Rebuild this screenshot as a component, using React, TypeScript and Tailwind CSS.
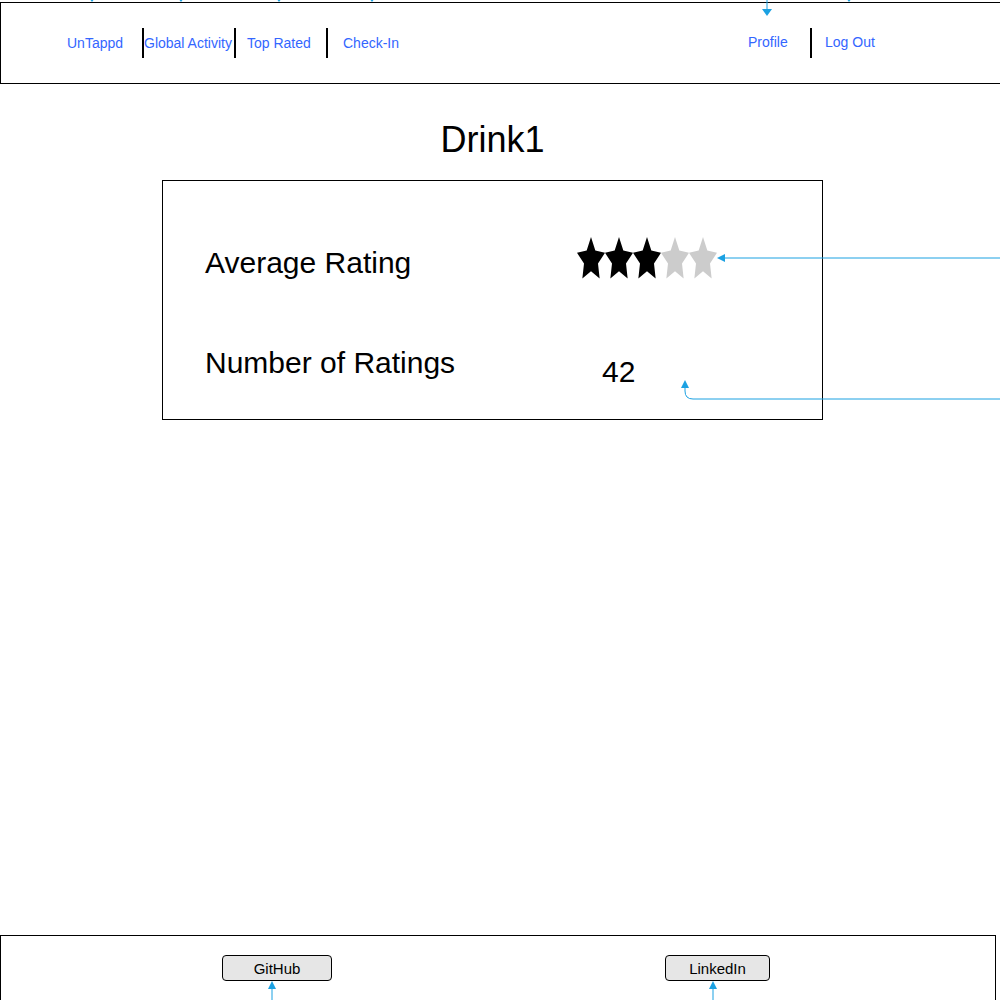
import React from 'react';

const ARROW = '#1ba1e2';

const Star: React.FC<{ filled: boolean }> = ({ filled }) => (
  <svg width="28" height="42" viewBox="2 2 20 19.3" preserveAspectRatio="none" className="shrink-0">
    <path
      d="M12 2l3.09 6.26L22 9.27l-5 4.87 1.18 6.88L12 17.77l-6.18 3.25L7 14.14 2 9.27l6.91-1.01L12 2z"
      fill={filled ? '#000000' : '#cccccc'}
    />
  </svg>
);

const Separator = () => <span className="w-[2px] h-[30px] bg-black shrink-0" />;

const Connectors = () => (
  <svg className="absolute inset-0 pointer-events-none" width="1000" height="1000">
    {/* tips of arrows entering the nav bar */}
    {[92, 181, 279, 372, 849].map((x) => (
      <path key={x} d={`M${x - 3} -2 L${x + 3} -2 L${x} 2 Z`} fill={ARROW} />
    ))}
    <line x1="767" y1="0" x2="767" y2="10" stroke={ARROW} strokeWidth="1" />
    <path d="M762 9 L772 9 L767 16 Z" fill={ARROW} />

    {/* rating arrow */}
    <line x1="1000" y1="258" x2="724" y2="258" stroke={ARROW} strokeWidth="1" />
    <path d="M717 258 L725 254 L725 262 Z" fill={ARROW} />

    {/* count arrow */}
    <path d="M1000 399 L693 399 Q685 399 685 391 L685 387" stroke={ARROW} strokeWidth="1" fill="none" />
    <path d="M685 380 L681 388 L689 388 Z" fill={ARROW} />

    {/* footer arrows */}
    <line x1="272" y1="1000" x2="272" y2="988" stroke={ARROW} strokeWidth="1" />
    <path d="M272 981 L268 989 L276 989 Z" fill={ARROW} />
    <line x1="713" y1="1000" x2="713" y2="988" stroke={ARROW} strokeWidth="1" />
    <path d="M713 981 L709 989 L717 989 Z" fill={ARROW} />
  </svg>
);

export default function App() {
  const rating = 3;

  return (
    <div className="relative w-[1000px] h-[1000px] overflow-hidden bg-white flex flex-col font-['Liberation_Sans',Arial,sans-serif] text-black">
      {/* Nav bar */}
      <header className="mt-[2px] h-[82px] w-[1010px] shrink-0 border border-black flex items-center pl-[66px] text-[14px] text-[#3366ff]">
        <span className="w-[75px] shrink-0">UnTappd</span>
        <Separator />
        <span className="w-[90px] shrink-0 whitespace-nowrap">Global Activity</span>
        <Separator />
        <span className="w-[90px] shrink-0 pl-[11px] whitespace-nowrap">Top Rated</span>
        <Separator />
        <span className="w-[72px] shrink-0 pl-[15px]">Check-In</span>
        <span className="ml-[348px] w-[62px] shrink-0 -mt-[2px]">Profile</span>
        <Separator />
        <span className="pl-[13px] shrink-0 whitespace-nowrap -mt-[2px]">Log Out</span>
      </header>

      <h1 className="mt-[34px] ml-[162px] w-[661px] text-center text-[36px] leading-[44px]">Drink1</h1>

      {/* Drink stats */}
      <section className="mt-[18px] ml-[162px] w-[661px] h-[240px] shrink-0 border border-black pt-[56px] pl-[42px]">
        <div className="flex items-start h-[44px]">
          <span className="w-[372px] shrink-0 mt-[8px] text-[30px] leading-[36px]">Average Rating</span>
          <div className="flex h-[42px]">
            {[1, 2, 3, 4, 5].map((i) => (
              <Star key={i} filled={i <= rating} />
            ))}
          </div>
        </div>
        <div className="mt-[64px] flex items-start">
          <span className="w-[397px] shrink-0 text-[30px] leading-[36px]">Number of Ratings</span>
          <span className="mt-[9px] text-[30px] leading-[36px]">42</span>
        </div>
      </section>

      {/* Footer */}
      <footer className="mt-auto h-[65px] w-[996px] shrink-0 border-t border-l border-r border-black flex items-start pt-[19px] text-[15px]">
        <button className="ml-[221px] w-[110px] h-[26px] bg-[#e6e6e6] border border-black rounded-[4px] leading-none">
          GitHub
        </button>
        <button className="ml-[333px] w-[105px] h-[26px] bg-[#e6e6e6] border border-black rounded-[4px] leading-none">
          LinkedIn
        </button>
      </footer>

      <Connectors />
    </div>
  );
}
